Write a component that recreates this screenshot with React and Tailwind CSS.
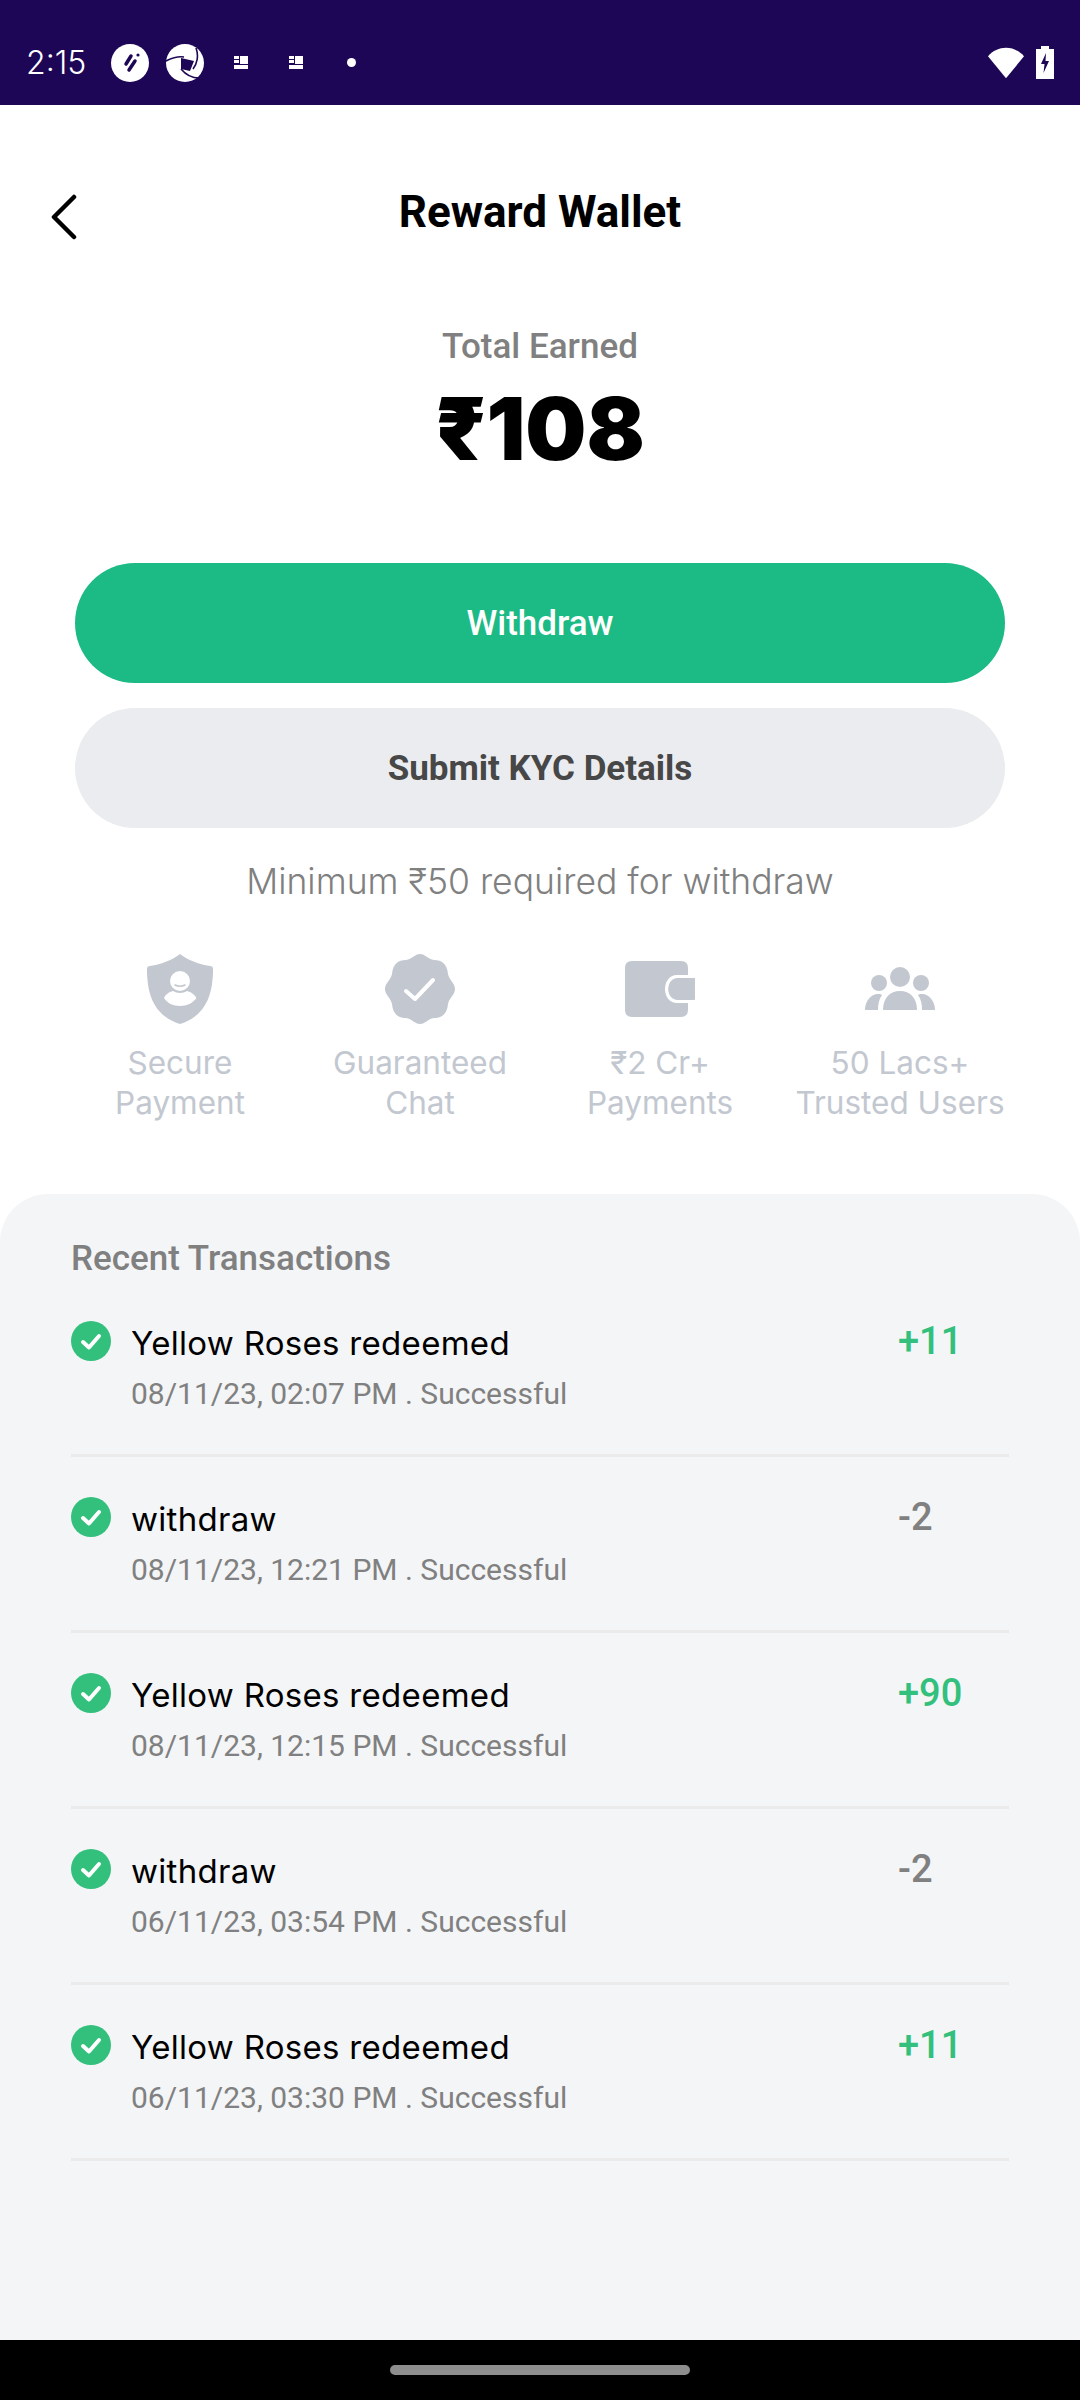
import React from 'react';

const transactions = [
  { title: 'Yellow Roses redeemed', date: '08/11/23, 02:07 PM . Successful', amount: '+11' },
  { title: 'withdraw', date: '08/11/23, 12:21 PM . Successful', amount: '-2' },
  { title: 'Yellow Roses redeemed', date: '08/11/23, 12:15 PM . Successful', amount: '+90' },
  { title: 'withdraw', date: '06/11/23, 03:54 PM . Successful', amount: '-2' },
  { title: 'Yellow Roses redeemed', date: '06/11/23, 03:30 PM . Successful', amount: '+11' },
];

const GridGlyph = () => (
  <svg width="14" height="14" viewBox="0 0 14 14" fill="white">
    <rect x="0" y="0" width="5" height="3" />
    <rect x="0" y="4" width="5" height="3" />
    <rect x="6" y="0" width="8" height="8" />
    <rect x="0" y="9" width="14" height="4" />
  </svg>
);

const StatusBar = () => (
  <div className="h-[105px] bg-[#1e0656] flex items-center justify-between pl-[26px] pr-[26px] pt-[20px]">
    <div className="flex items-center">
      <span className="text-white text-[32px] font-['Inter'] font-light w-[60px]">2:15</span>
      <svg className="ml-[25px]" width="38" height="38" viewBox="0 0 38 38">
        <circle cx="19" cy="19" r="19" fill="white" />
        <path d="M20 12 L15 20 M24 17 L18 26" stroke="#1e0656" strokeWidth="3.5" strokeLinecap="round" />
        <circle cx="27" cy="11" r="1.6" fill="#1e0656" />
      </svg>
      <svg className="ml-[17px]" width="38" height="38" viewBox="0 0 38 38">
        <circle cx="19" cy="19" r="19" fill="white" />
        <path d="M15 14 L28 17 L24 27 L15 25 Z" fill="#1e0656" />
        <path d="M0 17 C6 14 12 12 18 13 M30 4 C33 12 31 20 27 25 M15 25 C20 31 26 34 33 34" fill="none" stroke="#1e0656" strokeWidth="1.6" />
      </svg>
      <div className="ml-[30px]"><GridGlyph /></div>
      <div className="ml-[41px]"><GridGlyph /></div>
      <div className="ml-[44px] w-[9px] h-[9px] rounded-full bg-white" />
    </div>
    <div className="flex items-center gap-[12px]">
      <svg width="36" height="32" viewBox="0 0 38 32">
        <path d="M0 9 C10 -3 28 -3 38 9 L19 32 Z" fill="white" />
      </svg>
      <svg width="18" height="33" viewBox="0 0 18 33">
        <path d="M5 0 H13 V3 H18 V33 H0 V3 H5 Z" fill="white" />
        <path d="M10 7 L5 18 H8.5 L7.5 27 L13 15 H9.5 Z" fill="#1e0656" />
      </svg>
    </div>
  </div>
);

const ShieldIcon = () => (
  <svg width="66" height="70" viewBox="0 0 66 70">
    <path d="M33 0 C41 6 51 10 63 12 C65 12 66 13 66 15 C66 42 58 62 33 70 C8 62 0 42 0 15 C0 13 1 12 3 12 C15 10 25 6 33 0 Z" fill="#c2c7d0" />
    <circle cx="33" cy="27" r="10" fill="white" />
    <path d="M28 31 C31 32.5 35 32.5 38 31" fill="none" stroke="#c2c7d0" strokeWidth="1.5" strokeLinecap="round" />
    <path d="M26 37 C30 39.5 36 39.5 40 37 C44 38 48 41 49.5 44 C46 49 40 52 33 52 C26 52 20 49 17 44 C18 41 22 38 26 37 Z" fill="white" />
  </svg>
);

const BadgeIcon = () => (
  <svg width="70" height="70" viewBox="0 0 70 70">
    <path d="M35 0 C40 0 43 5 49 6 C57 6 62 10 63 20 C64 26 70 29 70 35 C70 41 64 44 63 50 C62 60 57 64 49 64 C43 65 40 70 35 70 C30 70 27 65 21 64 C13 64 8 60 7 50 C6 44 0 41 0 35 C0 29 6 26 7 20 C8 10 13 6 21 6 C27 5 30 0 35 0 Z" fill="#c2c7d0" />
    <path d="M21 37 L30 45 L48 26" fill="none" stroke="white" strokeWidth="4" strokeLinecap="round" strokeLinejoin="round" />
  </svg>
);

const WalletIcon = () => (
  <svg width="70" height="56" viewBox="0 0 70 56">
    <path d="M7 0 H56 Q63 0 63 7 V14 H52 C36 14 36 42 52 42 H63 V49 Q63 56 56 56 H7 Q0 56 0 49 V7 Q0 0 7 0 Z" fill="#c2c7d0" />
    <path d="M70 17 V38 Q70 39 69 39 H53 C40 39 40 17 53 17 Z" fill="#c2c7d0" />
  </svg>
);

const UsersIcon = () => (
  <svg width="70" height="43" viewBox="0 0 70 43">
    <circle cx="35" cy="10" r="10" fill="#c2c7d0" />
    <circle cx="14" cy="16" r="8" fill="#c2c7d0" />
    <circle cx="56" cy="16" r="8" fill="#c2c7d0" />
    <path d="M18 43 C18 31 25 24 35 24 C45 24 52 31 52 43 Z" fill="#c2c7d0" />
    <path d="M0 43 C0 34 6 27 13 27 C15 27 16 27 17 28 C14 32 13 37 13 43 Z" fill="#c2c7d0" />
    <path d="M70 43 C70 34 64 27 57 27 C55 27 54 27 53 28 C56 32 57 37 57 43 Z" fill="#c2c7d0" />
  </svg>
);

const features = [
  { icon: <ShieldIcon />, lines: ['Secure', 'Payment'] },
  { icon: <BadgeIcon />, lines: ['Guaranteed', 'Chat'] },
  { icon: <WalletIcon />, lines: ['₹2 Cr+', 'Payments'] },
  { icon: <UsersIcon />, lines: ['50 Lacs+', 'Trusted Users'] },
];

const CheckDot = () => (
  <svg className="shrink-0" width="40" height="40" viewBox="0 0 40 40">
    <circle cx="20" cy="20" r="20" fill="#32c07c" />
    <path d="M12 21 L18 26.5 L28 15" fill="none" stroke="white" strokeWidth="4" strokeLinecap="round" strokeLinejoin="round" />
  </svg>
);

const TransactionRow = ({ item }) => (
  <div className="h-[176px] border-b-[3px] border-[#ebebeb] flex items-start relative">
    <div className="mt-[40px]"><CheckDot /></div>
    <div className="ml-[20px] flex-1">
      <p className="mt-[39px] text-[33px] leading-[46px] text-black font-['Inter'] tracking-[0.3px]">{item.title}</p>
      <p className="mt-[8px] text-[30px] leading-[40px] text-[#808080] font-['Roboto']">{item.date}</p>
    </div>
    <span className={`absolute left-[827px] top-[35px] text-[38px] leading-[50px] font-['Roboto'] font-medium ${item.amount.startsWith('+') ? 'text-[#32c07c]' : 'text-[#808080]'}`}>
      {item.amount}
    </span>
  </div>
);

export default function App() {
  return (
    <div className="w-[1080px] h-[2400px] bg-white flex flex-col overflow-hidden font-['Roboto',sans-serif]">
      <StatusBar />

      <div className="relative h-[88px] mt-[63px] flex items-center justify-center">
        <svg className="absolute left-[50px] top-[26px]" width="28" height="46" viewBox="0 0 28 46">
          <path d="M24 3 L4 23 L24 43" fill="none" stroke="black" strokeWidth="4.5" strokeLinecap="round" strokeLinejoin="round" />
        </svg>
        <h1 className="text-[44px] font-bold text-black font-['Roboto'] leading-[52px]">Reward Wallet</h1>
      </div>

      <p className="mt-[69px] text-center text-[35px] leading-[44px] text-[#808080] font-medium font-['Roboto']">Total Earned</p>
      <p className="mt-[10px] text-center text-[86px] leading-[100px] text-black font-black font-['Inter',_'Noto_Sans']">₹108</p>

      <div className="mt-[84px] px-[75px] flex flex-col gap-[25px]">
        <button className="h-[120px] pt-[2px] rounded-full bg-[#1cba84] text-white text-[35px] font-medium font-['Roboto']">Withdraw</button>
        <button className="h-[120px] pt-[2px] rounded-full bg-[#ebecf0] text-[#474747] text-[35px] font-bold font-['Roboto']">Submit KYC Details</button>
      </div>

      <p className="mt-[32px] text-center text-[35.5px] leading-[44px] text-[#808080] font-light font-['Inter']">Minimum ₹50 required for withdraw</p>

      <div className="mt-[47px] grid grid-cols-4 px-[60px] text-[#c2c7d0]">
        {features.map((f) => (
          <div key={f.lines[1]} className="flex flex-col items-center">
            <div className="h-[75px] flex items-center justify-center">{f.icon}</div>
            <div className="mt-[17px] text-center text-[31.5px] leading-[40px] font-['Inter'] whitespace-nowrap">
              {f.lines.map((l) => <p key={l}>{l}</p>)}
            </div>
          </div>
        ))}
      </div>

      <div className="mt-[71px] flex-1 bg-[#f4f5f7] rounded-t-[48px] pt-[45px] px-[71px] pr-[71px]">
        <h2 className="text-[35px] leading-[40px] text-[#808080] font-medium font-['Roboto']">Recent Transactions</h2>
        <div className="mt-[2px]">
          {transactions.map((t, i) => <TransactionRow key={i} item={t} />)}
        </div>
      </div>

      <div className="h-[60px] bg-black flex items-center justify-center">
        <div className="w-[300px] h-[10px] rounded-full bg-[#8e8e8e]" />
      </div>
    </div>
  );
}
